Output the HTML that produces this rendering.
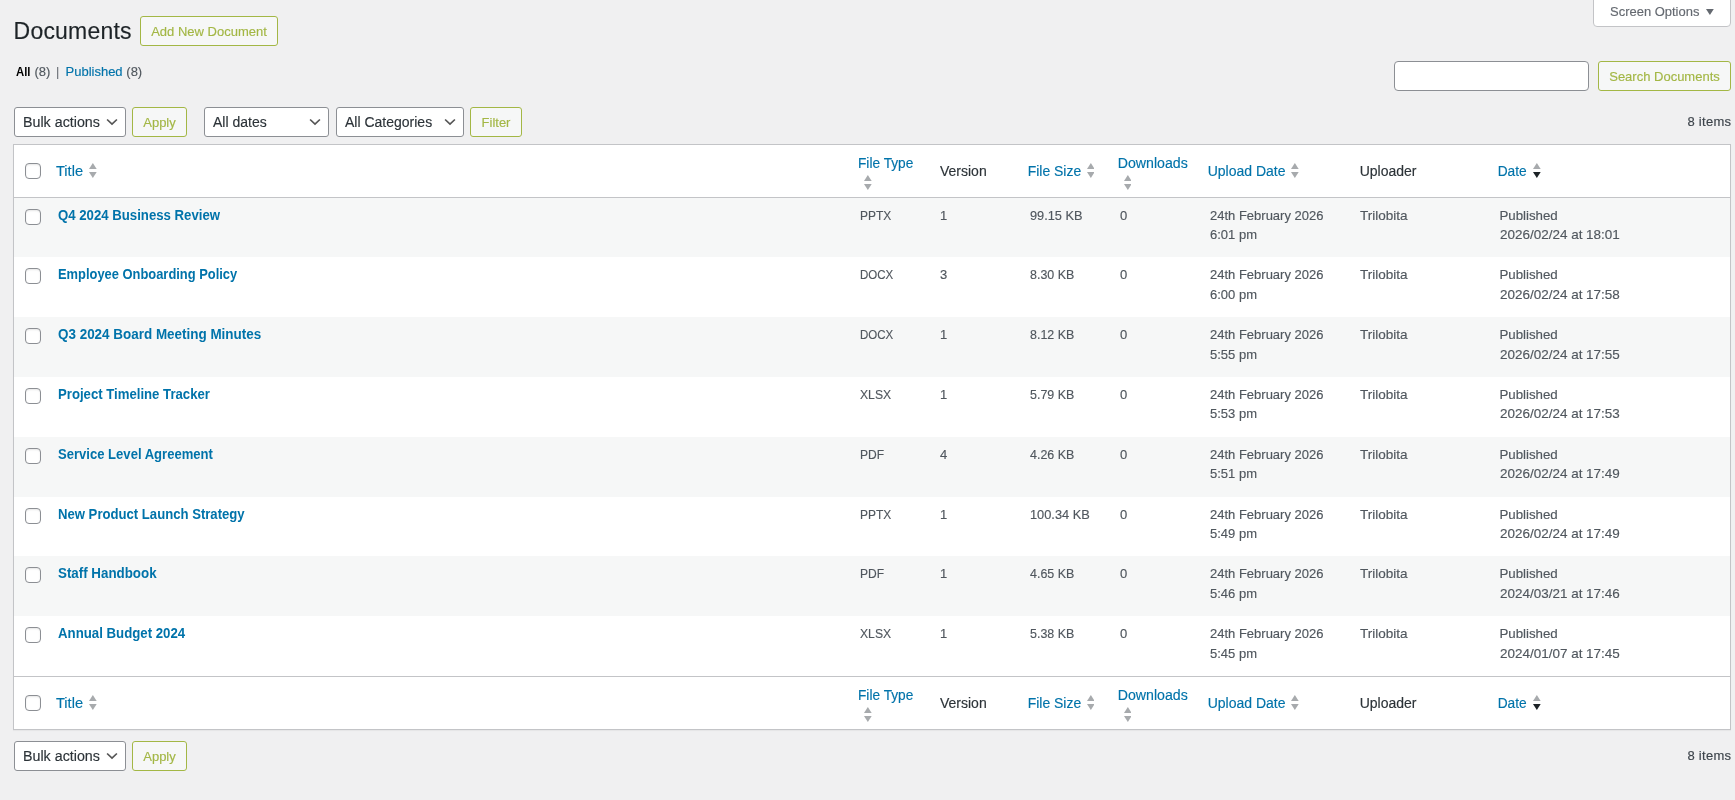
<!DOCTYPE html>
<html lang="en">
<head>
<meta charset="utf-8">
<title>Documents</title>
<style>
*{box-sizing:border-box;}
html,body{margin:0;padding:0;}
body{-webkit-text-stroke:0.15px currentColor;width:1735px;height:800px;overflow:hidden;background:#f0f0f1;color:#3c434a;font-family:"Liberation Sans",sans-serif;font-size:13px;line-height:1.4;position:relative;}
a{color:#0073aa;text-decoration:none;}
.abs{position:absolute;}
h1{position:absolute;left:13.6px;top:15px;margin:0;font-size:23px;font-weight:400;line-height:32px;color:#1d2327;letter-spacing:0.2px;}
.btn{position:absolute;display:block;padding-top:1px;border:1px solid #a3b745;border-radius:3px;background:#f6f7f7;color:#a3b745;font-size:13px;text-align:center;white-space:nowrap;}
.sel{position:absolute;display:block;border:1px solid #8c8f94;border-radius:3px;background:#fff;color:#2c3338;font-size:14px;line-height:28px;padding-left:8px;white-space:nowrap;}
.sel svg{position:absolute;right:7px;top:10px;}
#screenopt{position:absolute;left:1593px;top:-1px;width:138px;height:28px;border:1px solid #c3c4c7;border-radius:0 0 4px 4px;background:#fff;color:#646970;font-size:13px;line-height:24px;padding-left:16px;}
.subsub{position:absolute;left:0;top:62px;font-size:13px;line-height:19px;color:#50575e;white-space:nowrap;}
.subsub b{color:#000;font-weight:700;-webkit-text-stroke:0;}
.subsub>*{position:absolute;top:0;}
#search{position:absolute;left:1394px;top:61px;width:195px;height:30px;border:1px solid #8c8f94;border-radius:4px;background:#fff;}
.items{position:absolute;right:3.6px;letter-spacing:0.3px;font-size:13px;line-height:20px;color:#3c434a;}

table{position:absolute;left:13px;top:143.6px;width:1718px;border:1px solid #c3c4c7;background:#fff;border-spacing:0;table-layout:fixed;box-shadow:0 1px 1px rgba(0,0,0,.04);}
th,td{padding:0;margin:0;text-align:left;vertical-align:top;font-weight:400;}
thead th{height:53px;border-bottom:1px solid #c3c4c7;font-size:14px;line-height:19.6px;color:#2c3338;vertical-align:middle;}
tfoot th{height:53px;border-top:1px solid #c3c4c7;font-size:14px;line-height:19.6px;color:#2c3338;vertical-align:middle;}
tbody td{height:59.8px;padding:8px 10px;font-size:13px;line-height:19.5px;color:#50575e;}
tbody tr:nth-child(odd) td{background:#f6f7f7;}
td.t a{-webkit-text-stroke:0;font-size:14px;font-weight:700;line-height:19.6px;}
.cb{display:block;width:16px;height:16px;border:1px solid #8c8f94;border-radius:4px;background:#fff;box-shadow:inset 0 1px 2px rgba(0,0,0,.1);}
td.c{padding:11px 0 0 11px;}
.hd{position:absolute;left:0;width:1735px;height:52px;}
.hd .cb,.hd .l,.hd .si{position:absolute;}
.hd .l{transform-origin:0 50%;font-size:14px;line-height:16px;white-space:nowrap;color:#0073aa;}
.hd .l.p{color:#2c3338;}
.sx{display:inline-block;transform-origin:0 50%;white-space:nowrap;}
#wrap{position:absolute;left:0;top:0;width:1735px;height:800px;will-change:transform;}
</style>
</head>
<body>
<div id="wrap">
<div id="screenopt"><span class="sx" style="transform:scaleX(0.998)">Screen Options</span><svg style="position:absolute;left:112.3px;top:9px" width="8" height="6" viewBox="0 0 8 6"><path d="M0 0 L7.8 0 L3.9 6Z" fill="#646970"/></svg></div>
<h1>Documents</h1>
<div class="btn" style="left:140px;top:16px;width:138px;height:30px;line-height:28px;">Add New Document</div>
<div class="subsub"><b class="sx" style="left:16px;transform:scaleX(0.873)">All</b><span style="left:34.4px">(8)</span><span style="left:56.1px;color:#646970;-webkit-text-stroke:0">|</span><a style="left:65.5px">Published</a><span style="left:126.3px">(8)</span></div>
<div id="search"></div>
<div class="btn" style="left:1598px;top:61px;width:133px;height:30px;line-height:28px;">Search Documents</div>

<div class="sel" style="left:14px;top:107px;width:112px;height:30px;"><span class="sx" style="transform:scaleX(1.0185)">Bulk actions</span><svg width="12" height="8" viewBox="0 0 12 8"><path d="M1.1 1.5 L6 6.1 L10.9 1.5" fill="none" stroke="#555" stroke-width="1.7"/></svg></div>
<div class="btn" style="left:132px;top:107px;width:55px;height:30px;line-height:28px;">Apply</div>
<div class="sel" style="left:204px;top:107px;width:125px;height:30px;">All dates<svg width="12" height="8" viewBox="0 0 12 8"><path d="M1.1 1.5 L6 6.1 L10.9 1.5" fill="none" stroke="#555" stroke-width="1.7"/></svg></div>
<div class="sel" style="left:336px;top:107px;width:128px;height:30px;">All Categories<svg width="12" height="8" viewBox="0 0 12 8"><path d="M1.1 1.5 L6 6.1 L10.9 1.5" fill="none" stroke="#555" stroke-width="1.7"/></svg></div>
<div class="btn" style="left:470px;top:107px;width:52px;height:30px;line-height:28px;">Filter</div>
<div class="items" style="top:112px;">8 items</div>

<table>
<colgroup><col style="width:34px"><col style="width:802px"><col style="width:80px"><col style="width:90px"><col style="width:90px"><col style="width:90px"><col style="width:150px"><col style="width:140px"><col></colgroup>
<thead><tr><th colspan="9"></th></tr></thead>
<tbody>
<tr><td class="c"><span class="cb"></span></td><td class="t"><a class="sx" style="transform:scaleX(0.9419)">Q4 2024 Business Review</a></td><td><span class="sx" style="transform:scaleX(0.92)">PPTX</span></td><td>1</td><td><span class="sx" style="transform:scaleX(0.983)">99.15 KB</span></td><td>0</td><td>24th February 2026<br>6:01 pm</td><td><span class="sx" style="transform:scaleX(1.041)">Trilobita</span></td><td><span class="sx" style="transform:translateX(-0.6px) scaleX(1.022)">Published</span><br><span class="sx" style="transform:scaleX(1.036)">2026/02/24 at 18:01</span></td></tr>
<tr><td class="c"><span class="cb"></span></td><td class="t"><a class="sx" style="transform:scaleX(0.9213)">Employee Onboarding Policy</a></td><td><span class="sx" style="transform:scaleX(0.886)">DOCX</span></td><td>3</td><td><span class="sx" style="transform:scaleX(0.957)">8.30 KB</span></td><td>0</td><td>24th February 2026<br>6:00 pm</td><td><span class="sx" style="transform:scaleX(1.041)">Trilobita</span></td><td><span class="sx" style="transform:translateX(-0.6px) scaleX(1.022)">Published</span><br><span class="sx" style="transform:scaleX(1.036)">2026/02/24 at 17:58</span></td></tr>
<tr><td class="c"><span class="cb"></span></td><td class="t"><a class="sx" style="transform:scaleX(0.9603)">Q3 2024 Board Meeting Minutes</a></td><td><span class="sx" style="transform:scaleX(0.886)">DOCX</span></td><td>1</td><td><span class="sx" style="transform:scaleX(0.957)">8.12 KB</span></td><td>0</td><td>24th February 2026<br>5:55 pm</td><td><span class="sx" style="transform:scaleX(1.041)">Trilobita</span></td><td><span class="sx" style="transform:translateX(-0.6px) scaleX(1.022)">Published</span><br><span class="sx" style="transform:scaleX(1.036)">2026/02/24 at 17:55</span></td></tr>
<tr><td class="c"><span class="cb"></span></td><td class="t"><a class="sx" style="transform:scaleX(0.94)">Project Timeline Tracker</a></td><td><span class="sx" style="transform:scaleX(0.937)">XLSX</span></td><td>1</td><td><span class="sx" style="transform:scaleX(0.957)">5.79 KB</span></td><td>0</td><td>24th February 2026<br>5:53 pm</td><td><span class="sx" style="transform:scaleX(1.041)">Trilobita</span></td><td><span class="sx" style="transform:translateX(-0.6px) scaleX(1.022)">Published</span><br><span class="sx" style="transform:scaleX(1.036)">2026/02/24 at 17:53</span></td></tr>
<tr><td class="c"><span class="cb"></span></td><td class="t"><a class="sx" style="transform:scaleX(0.9331)">Service Level Agreement</a></td><td><span class="sx" style="transform:scaleX(0.927)">PDF</span></td><td>4</td><td><span class="sx" style="transform:scaleX(0.957)">4.26 KB</span></td><td>0</td><td>24th February 2026<br>5:51 pm</td><td><span class="sx" style="transform:scaleX(1.041)">Trilobita</span></td><td><span class="sx" style="transform:translateX(-0.6px) scaleX(1.022)">Published</span><br><span class="sx" style="transform:scaleX(1.036)">2026/02/24 at 17:49</span></td></tr>
<tr><td class="c"><span class="cb"></span></td><td class="t"><a class="sx" style="transform:scaleX(0.9372)">New Product Launch Strategy</a></td><td><span class="sx" style="transform:scaleX(0.92)">PPTX</span></td><td>1</td><td><span class="sx" style="transform:scaleX(0.985)">100.34 KB</span></td><td>0</td><td>24th February 2026<br>5:49 pm</td><td><span class="sx" style="transform:scaleX(1.041)">Trilobita</span></td><td><span class="sx" style="transform:translateX(-0.6px) scaleX(1.022)">Published</span><br><span class="sx" style="transform:scaleX(1.036)">2026/02/24 at 17:49</span></td></tr>
<tr><td class="c"><span class="cb"></span></td><td class="t"><a class="sx" style="transform:scaleX(0.9527)">Staff Handbook</a></td><td><span class="sx" style="transform:scaleX(0.927)">PDF</span></td><td>1</td><td><span class="sx" style="transform:scaleX(0.957)">4.65 KB</span></td><td>0</td><td>24th February 2026<br>5:46 pm</td><td><span class="sx" style="transform:scaleX(1.041)">Trilobita</span></td><td><span class="sx" style="transform:translateX(-0.6px) scaleX(1.022)">Published</span><br><span class="sx" style="transform:scaleX(1.036)">2024/03/21 at 17:46</span></td></tr>
<tr><td class="c"><span class="cb"></span></td><td class="t"><a class="sx" style="transform:scaleX(0.945)">Annual Budget 2024</a></td><td><span class="sx" style="transform:scaleX(0.937)">XLSX</span></td><td>1</td><td><span class="sx" style="transform:scaleX(0.957)">5.38 KB</span></td><td>0</td><td>24th February 2026<br>5:45 pm</td><td><span class="sx" style="transform:scaleX(1.041)">Trilobita</span></td><td><span class="sx" style="transform:translateX(-0.6px) scaleX(1.022)">Published</span><br><span class="sx" style="transform:scaleX(1.036)">2024/01/07 at 17:45</span></td></tr>
</tbody>
<tfoot><tr><th colspan="9"></th></tr></tfoot>
</table>

<div class="hd" style="top:145px">
<span class="cb" style="left:25px;top:18px"></span>
<a class="l" style="left:56px;top:18px;transform:scaleX(1.042)">Title</a><svg class="si" style="left:89.4px;top:18px" width="7.7" height="15" viewBox="0 0 8 15" preserveAspectRatio="none"><path d="M0 6 L4 0 L8 6Z" fill="#a7aaad"/><path d="M0 9 L4 15 L8 9Z" fill="#a7aaad"/></svg>
<a class="l" style="left:858px;top:10px;transform:scaleX(0.979)">File Type</a><svg class="si" style="left:863.9px;top:30px" width="7.7" height="15" viewBox="0 0 8 15" preserveAspectRatio="none"><path d="M0 6 L4 0 L8 6Z" fill="#a7aaad"/><path d="M0 9 L4 15 L8 9Z" fill="#a7aaad"/></svg>
<span class="l p" style="left:940px;top:18px">Version</span>
<a class="l" style="left:1028px;top:18px;transform:translateX(-0.3px) scaleX(0.996)">File Size</a><svg class="si" style="left:1086.6px;top:18px" width="7.7" height="15" viewBox="0 0 8 15" preserveAspectRatio="none"><path d="M0 6 L4 0 L8 6Z" fill="#a7aaad"/><path d="M0 9 L4 15 L8 9Z" fill="#a7aaad"/></svg>
<a class="l" style="left:1118px;top:10px;transform:translateX(-0.3px) scaleX(1.012)">Downloads</a><svg class="si" style="left:1123.8px;top:30px" width="7.7" height="15" viewBox="0 0 8 15" preserveAspectRatio="none"><path d="M0 6 L4 0 L8 6Z" fill="#a7aaad"/><path d="M0 9 L4 15 L8 9Z" fill="#a7aaad"/></svg>
<a class="l" style="left:1208px;top:18px;transform:translateX(-0.3px) scaleX(1.0)">Upload Date</a><svg class="si" style="left:1291.4px;top:18px" width="7.7" height="15" viewBox="0 0 8 15" preserveAspectRatio="none"><path d="M0 6 L4 0 L8 6Z" fill="#a7aaad"/><path d="M0 9 L4 15 L8 9Z" fill="#a7aaad"/></svg>
<span class="l p" style="left:1360px;top:18px;transform:translateX(-0.3px) scaleX(1.0)">Uploader</span>
<a class="l" style="left:1498px;top:18px;transform:translateX(-0.3px) scaleX(0.98)">Date</a><svg class="si" style="left:1533.1px;top:18px" width="7.7" height="15" viewBox="0 0 8 15" preserveAspectRatio="none"><path d="M0 6 L4 0 L8 6Z" fill="#a7aaad"/><path d="M0 9 L4 15 L8 9Z" fill="#1d2327"/></svg>
</div>

<div class="hd" style="top:677px">
<span class="cb" style="left:25px;top:18px"></span>
<a class="l" style="left:56px;top:18px;transform:scaleX(1.042)">Title</a><svg class="si" style="left:89.4px;top:18px" width="7.7" height="15" viewBox="0 0 8 15" preserveAspectRatio="none"><path d="M0 6 L4 0 L8 6Z" fill="#a7aaad"/><path d="M0 9 L4 15 L8 9Z" fill="#a7aaad"/></svg>
<a class="l" style="left:858px;top:10px;transform:scaleX(0.979)">File Type</a><svg class="si" style="left:863.9px;top:30px" width="7.7" height="15" viewBox="0 0 8 15" preserveAspectRatio="none"><path d="M0 6 L4 0 L8 6Z" fill="#a7aaad"/><path d="M0 9 L4 15 L8 9Z" fill="#a7aaad"/></svg>
<span class="l p" style="left:940px;top:18px">Version</span>
<a class="l" style="left:1028px;top:18px;transform:translateX(-0.3px) scaleX(0.996)">File Size</a><svg class="si" style="left:1086.6px;top:18px" width="7.7" height="15" viewBox="0 0 8 15" preserveAspectRatio="none"><path d="M0 6 L4 0 L8 6Z" fill="#a7aaad"/><path d="M0 9 L4 15 L8 9Z" fill="#a7aaad"/></svg>
<a class="l" style="left:1118px;top:10px;transform:translateX(-0.3px) scaleX(1.012)">Downloads</a><svg class="si" style="left:1123.8px;top:30px" width="7.7" height="15" viewBox="0 0 8 15" preserveAspectRatio="none"><path d="M0 6 L4 0 L8 6Z" fill="#a7aaad"/><path d="M0 9 L4 15 L8 9Z" fill="#a7aaad"/></svg>
<a class="l" style="left:1208px;top:18px;transform:translateX(-0.3px) scaleX(1.0)">Upload Date</a><svg class="si" style="left:1291.4px;top:18px" width="7.7" height="15" viewBox="0 0 8 15" preserveAspectRatio="none"><path d="M0 6 L4 0 L8 6Z" fill="#a7aaad"/><path d="M0 9 L4 15 L8 9Z" fill="#a7aaad"/></svg>
<span class="l p" style="left:1360px;top:18px;transform:translateX(-0.3px) scaleX(1.0)">Uploader</span>
<a class="l" style="left:1498px;top:18px;transform:translateX(-0.3px) scaleX(0.98)">Date</a><svg class="si" style="left:1533.1px;top:18px" width="7.7" height="15" viewBox="0 0 8 15" preserveAspectRatio="none"><path d="M0 6 L4 0 L8 6Z" fill="#a7aaad"/><path d="M0 9 L4 15 L8 9Z" fill="#1d2327"/></svg>
</div>


<div class="sel" style="left:14px;top:741px;width:112px;height:30px;"><span class="sx" style="transform:scaleX(1.0185)">Bulk actions</span><svg width="12" height="8" viewBox="0 0 12 8"><path d="M1.1 1.5 L6 6.1 L10.9 1.5" fill="none" stroke="#555" stroke-width="1.7"/></svg></div>
<div class="btn" style="left:132px;top:741px;width:55px;height:30px;line-height:28px;">Apply</div>
<div class="items" style="top:746px;">8 items</div>
</div>
</body>
</html>
